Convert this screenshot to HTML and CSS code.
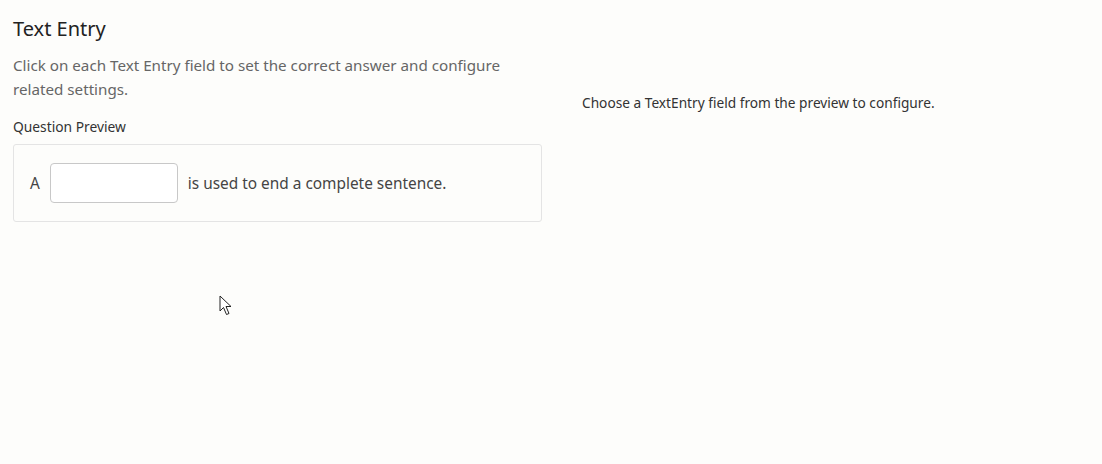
FILE: index.html
```html
<!DOCTYPE html>
<html>
<head>
<meta charset="utf-8">
<link rel="stylesheet" href="styles.css">
</head>
<body>
<div class="page">
  <div class="left">
    <h1 class="title">Text Entry</h1>
    <p class="desc">Click on each Text Entry field to set the correct answer and configure related settings.</p>
    <div class="label">Question Preview</div>
    <div class="preview">
      <span class="word">A</span>
      <span class="blank"></span>
      <span class="rest">is used to end a complete sentence.</span>
    </div>
  </div>
  <div class="right">
    <p class="hint">Choose a TextEntry field from the preview to configure.</p>
  </div>
</div>
<svg class="cursor" width="14" height="22" viewBox="0 0 14 22"><path d="M1 1 L1 16 L4.5 12.5 L7.5 19.5 L10 18.5 L7 11.5 L12 11.5 Z" fill="#fff" stroke="#222" stroke-width="1" stroke-linejoin="miter"/></svg>
</body>
</html>
```
FILE: styles.css
```css
html, body { margin: 0; padding: 0; }
body {
  background: #fdfdfb;
  font-family: "Noto Sans", "Open Sans", sans-serif;
  color: #333;
  width: 1102px;
  height: 464px;
  overflow: hidden;
  position: relative;
}
.page {
  display: flex;
  padding: 0 13px;
}
.left { width: 529px; }
.right { padding-left: 40px; padding-top: 94px; }
.title {
  margin: 16px 0 0;
  font-size: 20px;
  font-weight: 400;
  line-height: 26px;
  color: #222;
}
.desc {
  margin: 11px 0 0;
  font-size: 15.2px;
  line-height: 24px;
  color: #666;
}
.label {
  margin-top: 16px;
  font-size: 13.8px;
  line-height: 20px;
  color: #333;
}
.preview {
  margin-top: 7px;
  border: 1px solid #e4e4e4;
  border-radius: 3px;
  height: 76px;
  display: flex;
  align-items: center;
  padding-left: 16px;
  font-size: 15.4px;
  color: #444;
}
.blank {
  display: inline-block;
  width: 126px;
  height: 38px;
  border: 1px solid #c8c8c8;
  border-radius: 4px;
  background: #fff;
  margin: 0 10px;
}
.hint {
  margin: 0;
  font-size: 13.7px;
  line-height: 18px;
  color: #333;
}
.cursor { position: absolute; left: 219px; top: 295px; }
```
